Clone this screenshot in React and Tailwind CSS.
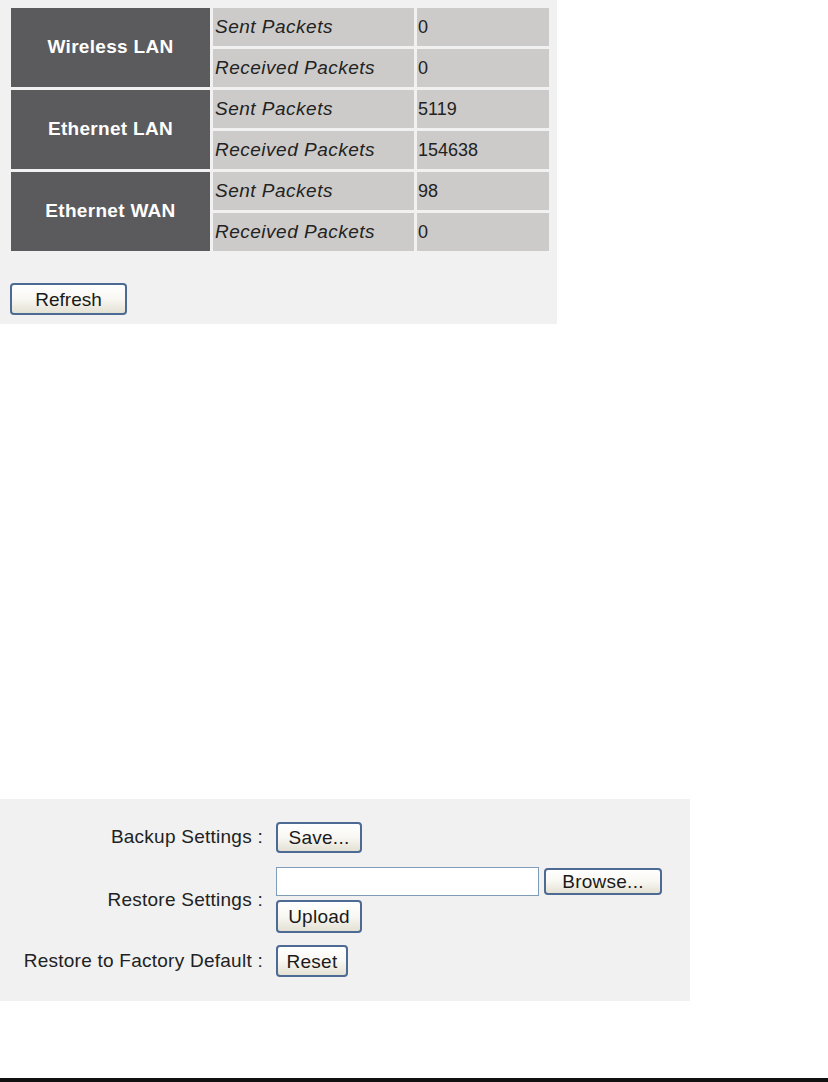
import React from "react";

const stats = [
  { name: "Wireless LAN", sent: "0", received: "0" },
  { name: "Ethernet LAN", sent: "5119", received: "154638" },
  { name: "Ethernet WAN", sent: "98", received: "0" },
];

function XpButton({ children, className = "" }) {
  return (
    <button
      className={`rounded-[4px] border-2 border-[#4d6a94] bg-gradient-to-b from-white via-[#f8f7f2] to-[#e4e1d4] text-[19px] leading-none text-[#1a1a1a] ${className}`}
    >
      {children}
    </button>
  );
}

function App() {
  return (
    <div className="relative h-[1082px] w-[828px] bg-white font-['Liberation_Sans',Arial,sans-serif]">
      {/* Statistics panel */}
      <div className="w-[557px] bg-[#f0f1f0] pt-[5px] pb-[9px]">
        <table className="ml-[8px] border-separate border-spacing-[3px]">
          <tbody>
            {stats.map((row) => (
              <React.Fragment key={row.name}>
                <tr className="h-[38px]">
                  <td
                    rowSpan={2}
                    className="w-[199px] bg-[#5b5b5d] p-0 text-center text-[19px] font-bold tracking-[0.3px] text-white"
                  >
                    {row.name}
                  </td>
                  <td className="w-[201px] bg-[#cdcbc9] py-0 pl-[2px] text-[19px] italic tracking-[0.5px] text-[#222]">
                    Sent Packets
                  </td>
                  <td className="w-[132px] bg-[#cdcbc9] py-0 pl-[1px] text-[18px] text-[#222]">
                    {row.sent}
                  </td>
                </tr>
                <tr className="h-[38px]">
                  <td className="bg-[#cdcbc9] py-0 pl-[2px] text-[19px] italic tracking-[0.5px] text-[#222]">
                    Received Packets
                  </td>
                  <td className="bg-[#cdcbc9] py-0 pl-[1px] text-[18px] text-[#222]">
                    {row.received}
                  </td>
                </tr>
              </React.Fragment>
            ))}
          </tbody>
        </table>
        <div className="ml-[10px] mt-[29px]">
          <XpButton className="h-[32px] w-[117px] text-[18px]">Refresh</XpButton>
        </div>
      </div>

      {/* Backup / restore panel */}
      <div className="mt-[475px] w-[690px] bg-[#f0f1f0] pt-[23px] pb-[24px] tracking-[0.25px]">
        <div className="flex items-center">
          <div className="w-[263px] text-right text-[19px] text-[#222]">Backup Settings :</div>
          <XpButton className="ml-[13px] h-[31px] w-[86px]">Save...</XpButton>
        </div>
        <div className="mt-[14px] flex items-center">
          <div className="w-[263px] text-right text-[19px] text-[#222]">Restore Settings :</div>
          <div className="ml-[13px] flex flex-col gap-[4px]">
            <div className="flex items-center gap-[5px]">
              <div className="h-[29px] w-[263px] border border-[#7f9db9] bg-white" />
              <XpButton className="h-[27px] w-[118px]">Browse...</XpButton>
            </div>
            <XpButton className="h-[33px] w-[86px]">Upload</XpButton>
          </div>
        </div>
        <div className="mt-[12px] flex items-center">
          <div className="w-[263px] text-right text-[19px] text-[#222]">Restore to Factory Default :</div>
          <XpButton className="ml-[13px] h-[32px] w-[72px]">Reset</XpButton>
        </div>
      </div>

      <div className="absolute bottom-0 left-0 h-[4px] w-full bg-[#111]" />
    </div>
  );
}

export default App;
